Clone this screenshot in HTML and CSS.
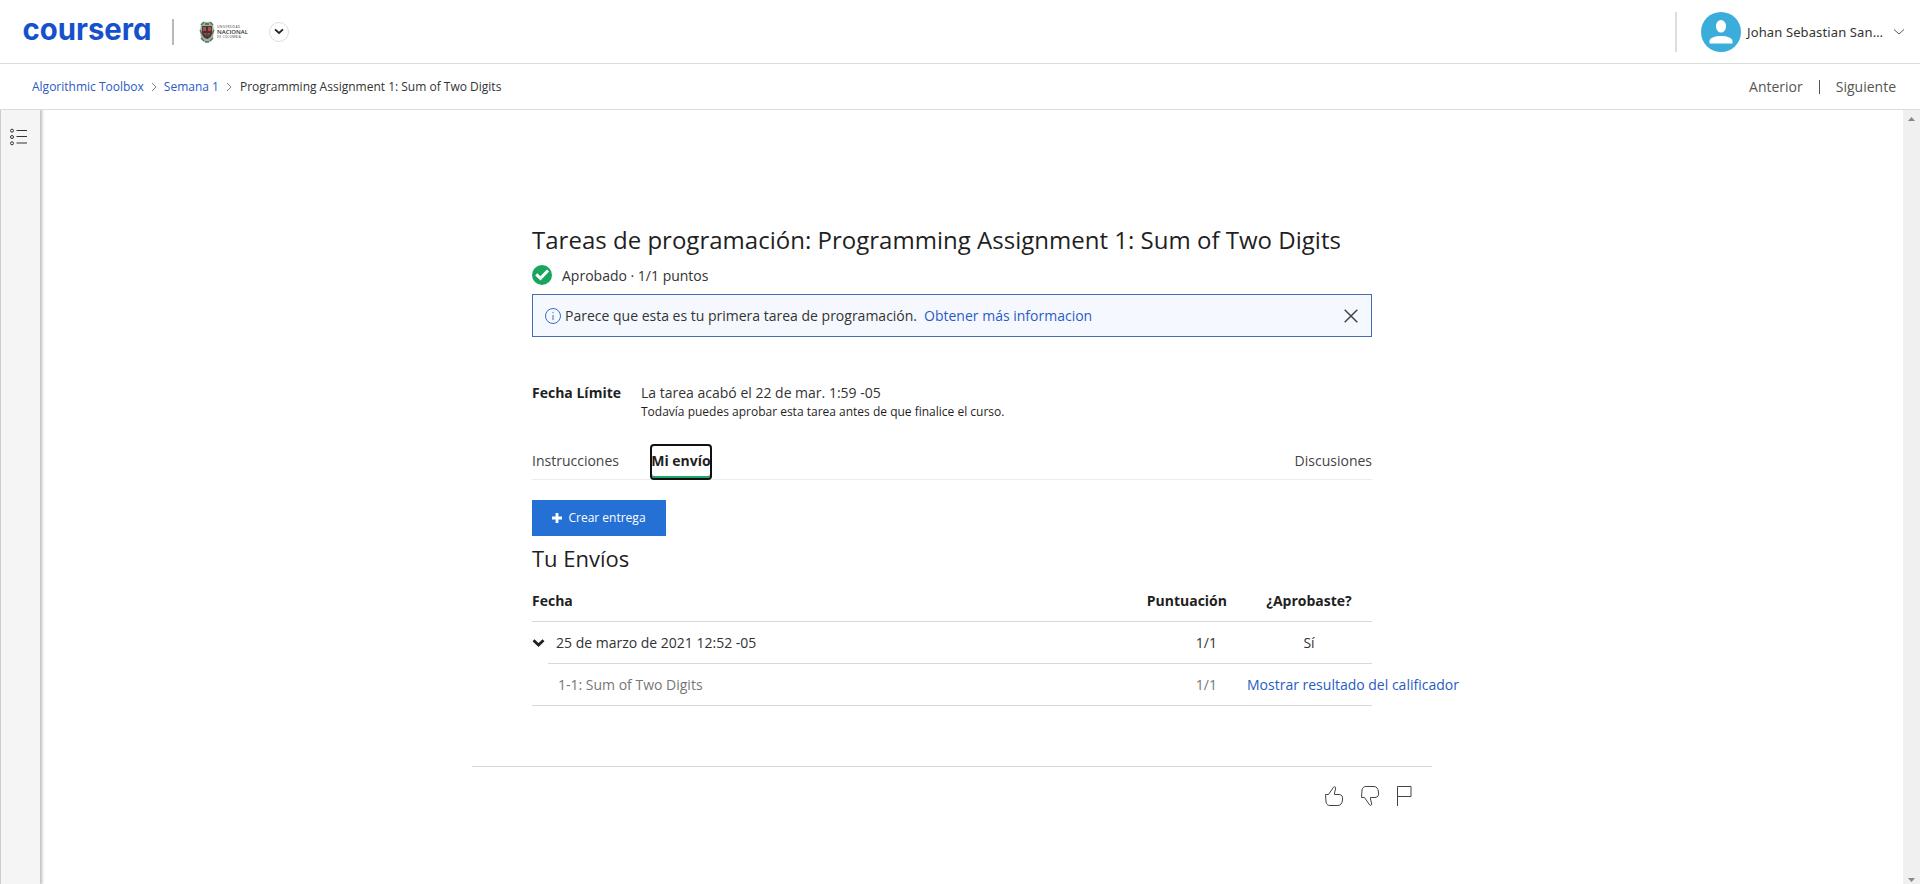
FILE: index.html
```html
<!DOCTYPE html>
<html lang="es">
<head>
<meta charset="utf-8">
<title>Programming Assignment 1: Sum of Two Digits | Coursera</title>
<link rel="stylesheet" href="styles.css">
</head>
<body>
<header class="topbar">
  <svg class="logo" width="136" height="54" viewBox="0 0 136 54"><text class="logo-text" x="2.500" y="35" textLength="129" lengthAdjust="spacingAndGlyphs">coursera</text></svg>
  <span class="logo-divider"></span>
  <div class="partner">
    <svg width="16" height="22" viewBox="0 0 16 22">
      <path d="M2 3Q4 0 8 1Q12 0 14 3L15 10L14 17L11 21H5L2 17L1 10Z" fill="#a5b3a0"/>
      <path d="M2 4l3-3M11 1l3 3M1 9l2 4M15 9l-2 4M2 17l3 3M14 17l-3 3M6 21h4" stroke="#53785a" stroke-width="1.5"/>
      <path d="M3 5H13V13Q12 17 8 18Q4 17 3 13Z" fill="#493e3e"/>
      <path d="M4 6h3v4H4zM9 6h3v4H9zM5 12h6l-3 4z" fill="#bd4850"/>
      <path d="M8 5v12M4 11h8" stroke="#333" stroke-width="1"/>
      <path d="M6 3h4" stroke="#547b54" stroke-width="2"/>
    </svg>
    <div class="partner-name"><span class="partner-small">UNIVERSIDAD</span><span class="partner-big">NACIONAL</span><span class="partner-small">DE COLOMBIA</span></div>
  </div>
  <button class="round-button" aria-label="Cambiar"><svg width="10" height="7" viewBox="0 0 10 7"><path d="M1 1.3L5 5L9 1.3" fill="none" stroke="#222" stroke-width="1.8"/></svg></button>
  <div class="account">
    <svg width="40" height="40" viewBox="0 0 40 40"><circle cx="20" cy="20" r="20" fill="#3badda"/><ellipse cx="20" cy="14.3" rx="5" ry="6.3" fill="#fff"/><path d="M8.5 31.5V29C8.5 26 14 24 20 24S31.500 26 31.500 29V31.500Z" fill="#fff"/></svg>
    <span class="account-name">Johan Sebastian San…</span>
    <svg class="account-caret" width="12" height="8" viewBox="0 0 12 8"><path d="M1 1.500L6 6L11 1.500" fill="none" stroke="#555" stroke-width="1"/></svg>
  </div>
</header>
<nav class="crumbs">
  <a>Algorithmic Toolbox</a>
  <svg width="6" height="10" viewBox="0 0 6 10"><path d="M1 1L5 5L1 9" fill="none" stroke="#777" stroke-width=".9"/></svg>
  <a>Semana 1</a>
  <svg width="6" height="10" viewBox="0 0 6 10"><path d="M1 1L5 5L1 9" fill="none" stroke="#777" stroke-width=".9"/></svg>
  <span class="crumb-current">Programming Assignment 1: Sum of Two Digits</span>
  <div class="pager"><span>Anterior</span><i class="pager-line"></i><span>Siguiente</span></div>
</nav>
<div class="workspace">
  <aside class="rail">
    <svg width="18" height="18" viewBox="0 0 18 18" fill="none" stroke="#333"><path d="M6.500 2.500H17M6.500 8.500H17M6.500 15H17" /><circle cx="2" cy="2.700" r="1.500"/><circle cx="2" cy="9" r="1.500"/><circle cx="2" cy="15.300" r="1.500"/></svg>
  </aside>
  <main class="page">
    <div class="content">
      <h1 class="title">Tareas de programación: Programming Assignment 1: Sum of Two Digits</h1>
      <div class="status">
        <svg width="20" height="20" viewBox="0 0 20 20"><circle cx="10" cy="10" r="10" fill="#18a65e"/><path d="M4.200 9.400L8.500 13.300L16 5.500" fill="none" stroke="#fff" stroke-width="3"/></svg>
        <span class="status-text">Aprobado · 1/1 puntos</span>
      </div>
      <div class="notice">
        <svg width="16" height="16" viewBox="0 0 16 16" fill="none" stroke="#3a6cc0"><circle cx="8" cy="8" r="7.500"/><path d="M8 7V12M8 4V5.200"/></svg>
        <span class="notice-text">Parece que esta es tu primera tarea de programación.</span>
        <a>Obtener más informacion</a>
        <svg class="notice-close" width="14" height="14" viewBox="0 0 14 14"><path d="M.7 .7L13.300 13.300M13.300 .7L.7 13.300" stroke="#444" stroke-width="1.500"/></svg>
      </div>
      <div class="deadline">
        <strong>Fecha Límite</strong>
        <div><div>La tarea acabó el 22 de mar. 1:59 -05</div><div class="deadline-note">Todavía puedes aprobar esta tarea antes de que finalice el curso.</div></div>
      </div>
      <div class="tabs">
        <span>Instrucciones</span><span class="tab-active">Mi envío</span><span class="tab-last">Discusiones</span>
      </div>
      <button class="create"><svg width="10" height="10" viewBox="0 0 10 10"><path d="M5 0V10M0 5H10" stroke="#fff" stroke-width="2.800"/></svg>Crear entrega</button>
      <h2 class="subtitle">Tu Envíos</h2>
      <div class="table">
        <div class="row head"><span>Fecha</span><span class="score">Puntuación</span><span class="passed">¿Aprobaste?</span></div>
        <div class="row"><span class="date"><svg width="14" height="10" viewBox="0 0 14 10"><path d="M1.500 2.200L6.500 7L11.500 2.200" fill="none" stroke="#222" stroke-width="2.800"/></svg>25 de marzo de 2021 12:52 -05</span><span class="score">1/1</span><span class="passed">Sí</span></div>
        <div class="row detail"><span class="part">1-1: Sum of Two Digits</span><span class="score">1/1</span><a class="result">Mostrar resultado del calificador</a></div>
      </div>
    </div>
    <div class="feedback">
      <svg width="20" height="22" viewBox="0 0 20 22" fill="none" stroke="#444"><path d="M1.500 9.500H4.500L9.500 2.200C11 1 12 2 11.500 4L10.500 8V9.500H15C18 9.500 19 12 18.500 15C18 18.500 16.500 20.500 14 20.500H6C3.500 20.500 2.500 19 2 17Z"/></svg>
      <svg width="20" height="22" viewBox="0 0 20 22" fill="none" stroke="#444"><path d="M1.500 12.500H4.500L9.500 19.800C11 21 12 20 11.500 18L10.500 14V12.500H15C18 12.500 19 10 18.500 7C18 3.500 16.500 1.500 14 1.500H6C3.500 1.500 2.500 3 2 5Z"/></svg>
      <svg width="16" height="22" viewBox="0 0 16 22" fill="none" stroke="#444"><path d="M1.500 21V1.500H15V11.500H1.500"/></svg>
    </div>
  </main>
  <div class="scrollbar">
    <svg width="7" height="4" viewBox="0 0 7 4"><path d="M0 4L3.500 0L7 4Z" fill="#888"/></svg>
    <svg width="7" height="4" viewBox="0 0 7 4"><path d="M0 0L3.500 4L7 0Z" fill="#888"/></svg>
  </div>
</div>
</body>
</html>
```
FILE: styles.css
```css
* { box-sizing: border-box; }
body { margin: 0; height: 884px; overflow: hidden; display: flex; flex-direction: column; background: #fff; color: #1f1f1f; font: 14px/20px "Open Sans", sans-serif; }
svg { display: block; flex: none; }
a { color: #2a5bc4; }
button { font: inherit; padding: 0; }

.topbar { height: 64px; flex: none; border-bottom: 1px solid #dcdcdc; display: flex; align-items: center; padding: 0 15px 0 20px; }
.logo-text { font: 700 30px Inter, sans-serif; font-feature-settings: "cv11"; fill: #1551cc; }
.logo-divider { width: 2px; height: 26px; background: #b8b8b8; margin-left: 16px; }
.partner { display: flex; align-items: center; gap: 2px; margin-left: 25px; width: 53px; }
.partner-name { display: flex; flex-direction: column; color: #333; }
.partner-small { font-size: 3px; line-height: 4px; letter-spacing: .35px; white-space: nowrap; }
.partner-big { font-size: 6px; line-height: 6px; font-weight: 600; white-space: nowrap; }
.round-button { width: 20px; height: 20px; border: 1px solid #ddd; border-radius: 50%; background: #fff; margin-left: 17px; display: flex; align-items: center; justify-content: center; }
.account { margin-left: auto; height: 40px; border-left: 2px solid #ddd; padding-left: 24px; display: flex; align-items: center; }
.account-name { font: 13px/20px "Noto Sans", sans-serif; letter-spacing: .12px; margin-left: 6px; width: 146px; white-space: nowrap; color: #333; }

.crumbs { height: 46px; flex: none; border-bottom: 1px solid #dcdcdc; display: flex; align-items: center; gap: 7px; padding: 0 24px 0 32px; font-size: 12px; }
.crumb-current { margin-left: 1px; color: #333; }
.pager { margin-left: auto; display: flex; align-items: center; gap: 16px; font-size: 14px; color: #555; }
.pager-line { width: 1px; height: 14px; background: #555; }

.workspace { flex: 1; display: flex; }
.rail { width: 40px; border-left: 1px solid #ccc; background: #f5f5f5; box-shadow: 1px 0 3px 1px #bbb; padding: 18px 0 0 9px; clip-path: inset(0 -6px 0 0); }
.page { flex: 1; }
.content { width: 840px; margin-left: 492px; padding-top: 112px; }
.title { margin: 0; font-size: 24px; line-height: 36px; font-weight: 400; letter-spacing: .015px; white-space: nowrap; }
.status { display: flex; align-items: center; gap: 10px; margin-top: 7px; height: 20px; color: #333; }
.status-text { padding-top: 2px; }
.notice { height: 43px; margin-top: 9px; border: 1px solid #456eb6; background: #f5f9ff; display: flex; align-items: center; padding: 0 13px 0 12px; }
.notice-text { margin: 0 7px 0 4px; color: #333; }
.notice-close { margin-left: auto; }
.deadline { margin-top: 46px; display: flex; height: 40px; color: #333; }
.deadline strong { width: 109px; color: #1f1f1f; font-weight: 700; }
.deadline-note { font-size: 12px; line-height: 17px; color: #1f1f1f; }
.tabs { height: 37px; margin-top: 20px; border-bottom: 1px solid #ececec; display: flex; line-height: 35px; color: #444; }
.tab-active { margin: 1px 0 0 31px; width: 62px; height: 36px; padding: 0; text-align: center; font-weight: 700; color: #1f1f1f; border: 2px solid #111; border-radius: 4px; box-shadow: inset 0 -2px #25a56a; line-height: 29px; white-space: nowrap; display: flex; justify-content: center; }
.tab-last { margin-left: auto; }
.create { width: 134px; height: 36px; margin-top: 20px; border: 0; background: #2570d4; color: #fff; font-size: 12px; font-weight: 500; display: flex; align-items: center; justify-content: center; gap: 6px; }
.subtitle { margin: 6px 0 0; font-size: 22px; line-height: 32px; font-weight: 400; }
.table { margin-top: 6px; }
.row { height: 42px; display: grid; grid-template-columns: 584px 141px 115px; align-items: center; border-bottom: 1px solid #d8d8d8; white-space: nowrap; color: #333; }
.head { font-weight: 700; color: #1f1f1f; }
.score { padding-right: 40px; text-align: right; }
.head .score { padding-right: 30px; }
.passed { padding-right: 11px; text-align: center; }
.date { display: flex; align-items: center; gap: 10px; }
.detail { color: #777; }
.row:nth-child(2) { border-bottom-color: transparent; background: linear-gradient(#d8d8d8, #d8d8d8) 16px 41px / 824px 1px no-repeat border-box; }
.part { padding-left: 26px; }
.result { margin-left: -10px; }
.feedback { width: 960px; margin: 60px 0 0 432px; border-top: 1px solid #d8d8d8; padding: 18px 20px 0 0; display: flex; justify-content: flex-end; gap: 16px; }
.scrollbar { width: 17px; background: #f0f0f0; padding: 7px 0 2px; display: flex; flex-direction: column; justify-content: space-between; align-items: center; }
```
